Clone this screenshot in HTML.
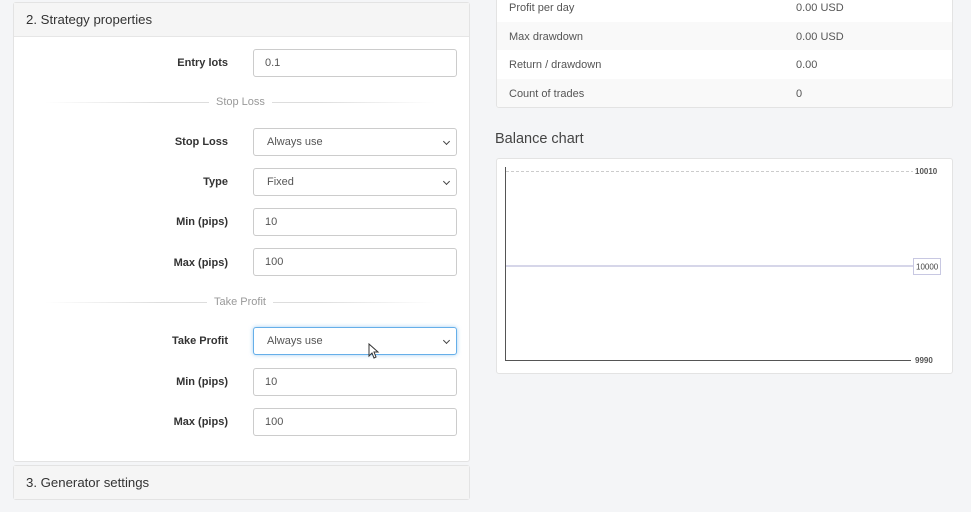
<!DOCTYPE html>
<html><head><style>
*{box-sizing:border-box;margin:0;padding:0}
body{width:971px;height:512px;background:#f4f5f7;font-family:"Liberation Sans",sans-serif;color:#333;position:relative;overflow:hidden}
.abs{position:absolute}
.panel{position:absolute;left:13px;width:457px;border:1px solid #e3e3e3;border-radius:3px;background:#fff}
.hdr{background:#f5f5f5;height:34px;padding:9px 12px;font-size:13.2px;color:#333;border-bottom:1px solid #e6e6e6}
.lbl{position:absolute;right:743px;font-size:11px;font-weight:bold;color:#333;text-align:right;width:150px}
.inp{position:absolute;left:253px;width:204px;height:28px;border:1px solid #ccc;border-radius:3px;background:#fff;font-size:11px;color:#555;padding:7px 11px}
.sel{padding-left:13px}
.sel:after{content:"";position:absolute;right:7px;top:10px;width:4px;height:4px;border-right:1.5px solid #444;border-bottom:1.5px solid #444;transform:rotate(45deg)}
.div{position:absolute;left:45px;width:390px;height:1px;background:linear-gradient(90deg,rgba(220,220,220,0),#ddd 30%,#ddd 70%,rgba(220,220,220,0))}
.divt{position:absolute;font-size:11px;color:#999;background:#fff;padding:0 7px}
.tbl{position:absolute;left:496px;top:-10px;width:457px;height:118px;background:#fff;border:1px solid #e3e3e3;border-radius:3px;overflow:hidden}
.row{height:28.5px;font-size:11px;color:#555;position:relative}
.row span{position:absolute;top:9px}
.g{background:#f9f9f9}
</style></head><body>
<div class="panel" style="top:2px;height:460px">
<div class="hdr">2. Strategy properties</div>
</div>
<div class="panel" style="top:465px;height:35px"><div class="hdr" style="border:none;height:33px;padding-top:9px">3. Generator settings</div></div>

<div class="lbl" style="top:57px">Entry lots</div><div class="inp" style="top:49px">0.1</div>
<div class="div" style="top:102px"></div><div class="divt" style="left:209px;top:96px">Stop Loss</div>
<div class="lbl" style="top:136px">Stop Loss</div><div class="inp sel" style="top:128px">Always use</div>
<div class="lbl" style="top:176px">Type</div><div class="inp sel" style="top:168px">Fixed</div>
<div class="lbl" style="top:216px">Min (pips)</div><div class="inp" style="top:208px">10</div>
<div class="lbl" style="top:257px">Max (pips)</div><div class="inp" style="top:248px">100</div>
<div class="div" style="top:302px"></div><div class="divt" style="left:207px;top:296px">Take Profit</div>
<div class="lbl" style="top:335px">Take Profit</div><div class="inp sel" style="top:327px;border-color:#66afe9;box-shadow:0 0 4px rgba(102,175,233,.6)">Always use</div>
<div class="lbl" style="top:376px">Min (pips)</div><div class="inp" style="top:368px">10</div>
<div class="lbl" style="top:416px">Max (pips)</div><div class="inp" style="top:408px">100</div>
<svg class="abs" style="left:368px;top:343px" width="12" height="16"><path d="M1 1v12l3-3 2 5 2-1-2-5h4z" fill="#fff" stroke="#333" stroke-width="1"/></svg>

<div class="tbl">
<div class="row" style="height:2px"></div>
<div class="row"><span style="left:12px">Profit per day</span><span style="left:299px">0.00 USD</span></div>
<div class="row g"><span style="left:12px">Max drawdown</span><span style="left:299px">0.00 USD</span></div>
<div class="row"><span style="left:12px">Return / drawdown</span><span style="left:299px">0.00</span></div>
<div class="row g"><span style="left:12px">Count of trades</span><span style="left:299px">0</span></div>
</div>
<div class="abs" style="left:495px;top:131px;font-size:14.5px;color:#444">Balance chart</div>
<div class="abs" style="left:496px;top:158px;width:457px;height:216px;background:#fff;border:1px solid #e3e3e3;border-radius:3px"></div>
<svg class="abs" style="left:0;top:0" width="971" height="512">
<line x1="506" y1="171.5" x2="913" y2="171.5" stroke="#ccc" stroke-dasharray="3,2"/>
<line x1="505.5" y1="167" x2="505.5" y2="360" stroke="#555"/>
<line x1="505" y1="360.5" x2="911" y2="360.5" stroke="#555"/>
<line x1="506" y1="266" x2="913" y2="266" stroke="#c8c8e2" stroke-width="1.5"/>
<rect x="913.5" y="258.5" width="27" height="16" fill="#fff" stroke="#c8c8e2"/>
<text x="915" y="174" font-size="8" fill="#555" font-family="Liberation Sans" font-weight="bold">10010</text>
<text x="916" y="269.5" font-size="8" fill="#444" font-family="Liberation Sans">10000</text>
<text x="915" y="363" font-size="8" fill="#555" font-family="Liberation Sans" font-weight="bold">9990</text>
</svg>
</body></html>
